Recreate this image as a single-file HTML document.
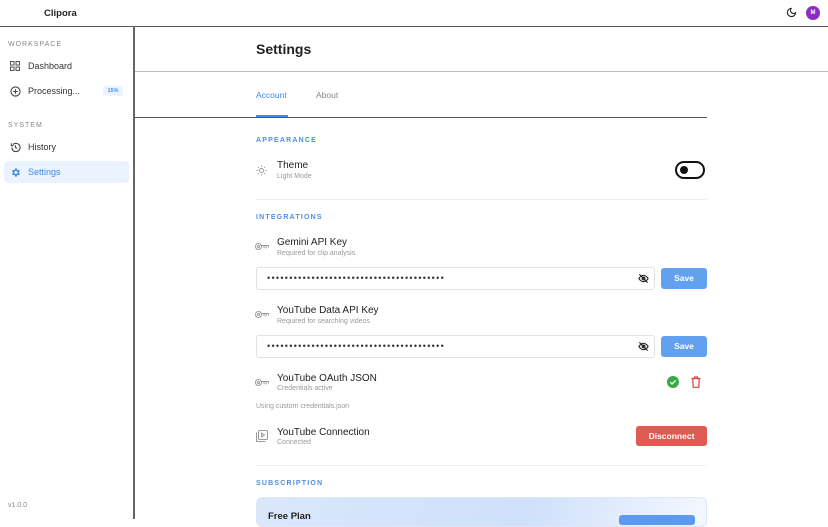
<!DOCTYPE html>
<html><head><meta charset="utf-8"><style>
*{box-sizing:border-box;margin:0;padding:0}
body{width:828px;height:519px;overflow:hidden;background:#fff;font-family:"Liberation Sans",sans-serif;color:#222;position:relative}
.a{position:absolute}
.lab{font-size:7px;font-weight:bold;letter-spacing:1.2px;color:#4a90e2}
.sl{font-size:7px;letter-spacing:1px;color:#888}
.ni{font-size:9px;color:#333}
.t{font-size:10px;color:#222;font-weight:500}
.s{font-size:7px;color:#999}
.inp{border:1px solid #e2e2e2;border-radius:3px;height:23px}
.dots{font-size:9px;letter-spacing:1.3px;color:#333;top:5px;left:10px}
.btn{background:#62a0f0;color:#fff;font-size:8.5px;font-weight:bold;border-radius:3px;text-align:center}
svg{position:absolute}
</style></head><body>
<div class="a" style="left:44px;top:8px;font-size:9.5px;font-weight:bold">Clipora</div>
<svg style="left:786px;top:7px" width="11" height="11" viewBox="0 0 24 24"><path d="M21 12.8A9 9 0 1 1 11.2 3a7 7 0 0 0 9.8 9.8z" fill="none" stroke="#222" stroke-width="2.4"/></svg>
<div class="a" style="left:806px;top:6px;width:14px;height:14px;border-radius:50%;background:#8e2bc4;color:#fff;font-size:6px;font-weight:bold;text-align:center;line-height:14px">M</div>
<div class="a" style="left:0;top:26px;width:828px;height:1px;background:#555"></div>
<div class="a" style="left:133px;top:26px;width:2px;height:493px;background:#666"></div>
<div class="a sl" style="left:8px;top:41px">WORKSPACE</div>
<svg style="left:10px;top:61px" width="10" height="10" viewBox="0 0 10 10" fill="none" stroke="#555" stroke-width="1"><rect x=".5" y=".5" width="3.5" height="3.5"/><rect x="6" y=".5" width="3.5" height="3.5"/><rect x=".5" y="6" width="3.5" height="3.5"/><rect x="6" y="6" width="3.5" height="3.5"/></svg>
<div class="a ni" style="left:28px;top:61px">Dashboard</div>
<svg style="left:10px;top:86px" width="11" height="11" viewBox="0 0 12 12" fill="none" stroke="#444" stroke-width="1.2"><circle cx="6" cy="6" r="5"/><path d="M6 3.5v5M3.5 6h5"/></svg>
<div class="a ni" style="left:28px;top:86px">Processing...</div>
<div class="a" style="left:103px;top:86px;width:20px;height:10px;background:#eaf3ff;color:#4a90e2;font-size:5.5px;font-weight:bold;text-align:center;line-height:10px;border-radius:2px">15%</div>
<div class="a sl" style="left:8px;top:122px">SYSTEM</div>
<svg style="left:10px;top:142px" width="11" height="11" viewBox="0 0 12 12" fill="none" stroke="#444" stroke-width="1.2"><path d="M2 6a4.5 4.5 0 1 0 1.3-3.2M1.5 1.5v2.5h2.5M6 3.5V6l1.8 1.2"/></svg>
<div class="a ni" style="left:28px;top:142px">History</div>
<div class="a" style="left:4px;top:161px;width:125px;height:22px;background:#eaf3ff;border-radius:4px"></div>
<svg style="left:10px;top:167px" width="11" height="11" viewBox="0 0 24 24"><path fill="#3d8ae8" d="M19.4 13a7.5 7.5 0 0 0 0-2l2.1-1.6-2-3.5-2.5 1a7.5 7.5 0 0 0-1.7-1L15 3h-4l-.4 2.9a7.5 7.5 0 0 0-1.7 1l-2.5-1-2 3.5L6.6 11a7.5 7.5 0 0 0 0 2l-2.1 1.6 2 3.5 2.5-1a7.5 7.5 0 0 0 1.7 1L11 21h4l.4-2.9a7.5 7.5 0 0 0 1.7-1l2.5 1 2-3.5zM13 15.5a3.5 3.5 0 1 1 0-7 3.5 3.5 0 0 1 0 7z"/></svg>
<div class="a ni" style="left:28px;top:167px;color:#3d8ae8">Settings</div>
<div class="a" style="left:8px;top:502px;font-size:7px;color:#888">v1.0.0</div>

<div class="a" style="left:256px;top:41px;font-size:14px;font-weight:bold">Settings</div>
<div class="a" style="left:135px;top:71px;width:693px;height:1px;background:#bbb"></div>
<div class="a" style="left:256px;top:90px;font-size:8.5px;color:#3d8ae8">Account</div>
<div class="a" style="left:316px;top:90px;font-size:8.5px;color:#888">About</div>
<div class="a" style="left:135px;top:117px;width:572px;height:1px;background:#555"></div>
<div class="a" style="left:256px;top:115px;width:32px;height:2px;background:#3d8ae8"></div>

<div class="a lab" style="left:256px;top:137px">APPEARANCE</div>
<svg style="left:256px;top:165px" width="11" height="11" viewBox="0 0 12 12" fill="none" stroke="#999" stroke-width="1"><circle cx="6" cy="6" r="2.2"/><path d="M6 .5v1.5M6 10v1.5M.5 6H2M10 6h1.5M2 2l1 1M9 9l1 1M2 10l1-1M9 3l1-1"/></svg>
<div class="a t" style="left:277px;top:160px">Theme</div>
<div class="a s" style="left:277px;top:173px">Light Mode</div>
<div class="a" style="left:675px;top:161px;width:30px;height:18px;border:2px solid #111;border-radius:9px"></div>
<div class="a" style="left:680px;top:166px;width:8px;height:8px;border-radius:50%;background:#111"></div>
<div class="a" style="left:256px;top:199px;width:451px;height:1px;background:#eee"></div>

<div class="a lab" style="left:256px;top:214px">INTEGRATIONS</div>
<svg style="left:255px;top:242px" width="14" height="9" viewBox="0 0 14 9" fill="none" stroke="#999" stroke-width="1"><circle cx="3.5" cy="4.5" r="3"/><circle cx="3.5" cy="4.5" r="1"/><path d="M6.5 3.5h7v2M11 3.5v3M9 3.5v2.5"/></svg>
<div class="a t" style="left:277px;top:237px">Gemini API Key</div>
<div class="a s" style="left:277px;top:250px">Required for clip analysis</div>
<div class="a inp" style="left:256px;top:267px;width:399px"><div class="a dots">••••••••••••••••••••••••••••••••••••••••</div></div>
<svg style="left:638px;top:273px" width="11" height="11" viewBox="0 0 24 24" fill="none" stroke="#222" stroke-width="2.6"><path d="M2 12s4-7 10-7 10 7 10 7-4 7-10 7S2 12 2 12z"/><circle cx="12" cy="12" r="3"/><path d="M3 3l18 18"/></svg>
<div class="a btn" style="left:661px;top:268px;width:46px;height:21px;line-height:21px">Save</div>

<svg style="left:255px;top:310px" width="14" height="9" viewBox="0 0 14 9" fill="none" stroke="#999" stroke-width="1"><circle cx="3.5" cy="4.5" r="3"/><circle cx="3.5" cy="4.5" r="1"/><path d="M6.5 3.5h7v2M11 3.5v3M9 3.5v2.5"/></svg>
<div class="a t" style="left:277px;top:305px">YouTube Data API Key</div>
<div class="a s" style="left:277px;top:318px">Required for searching videos</div>
<div class="a inp" style="left:256px;top:335px;width:399px"><div class="a dots">••••••••••••••••••••••••••••••••••••••••</div></div>
<svg style="left:638px;top:341px" width="11" height="11" viewBox="0 0 24 24" fill="none" stroke="#222" stroke-width="2.6"><path d="M2 12s4-7 10-7 10 7 10 7-4 7-10 7S2 12 2 12z"/><circle cx="12" cy="12" r="3"/><path d="M3 3l18 18"/></svg>
<div class="a btn" style="left:661px;top:336px;width:46px;height:21px;line-height:21px">Save</div>

<svg style="left:255px;top:378px" width="14" height="9" viewBox="0 0 14 9" fill="none" stroke="#999" stroke-width="1"><circle cx="3.5" cy="4.5" r="3"/><circle cx="3.5" cy="4.5" r="1"/><path d="M6.5 3.5h7v2M11 3.5v3M9 3.5v2.5"/></svg>
<div class="a t" style="left:277px;top:373px">YouTube OAuth JSON</div>
<div class="a s" style="left:277px;top:385px">Credentials active</div>
<svg style="left:667px;top:376px" width="12" height="12" viewBox="0 0 12 12"><circle cx="6" cy="6" r="6" fill="#3aa846"/><path d="M3.3 6.2l1.8 1.8 3.6-3.6" fill="none" stroke="#fff" stroke-width="1.3"/></svg>
<svg style="left:691px;top:376px" width="10" height="12" viewBox="0 0 10 12" fill="none" stroke="#e04a3f" stroke-width="1.3"><path d="M.5 2.5h9M3.5 2.5V1h3v1.5M1.8 2.5l.5 9h5.4l.5-9"/></svg>
<div class="a s" style="left:256px;top:403px">Using custom credentials.json</div>
<svg style="left:256px;top:430px" width="12" height="12" viewBox="0 0 12 12" fill="none" stroke="#999" stroke-width="1"><rect x="2.5" y=".5" width="9" height="9" rx="1"/><path d="M.5 2.5v9h9"/><path d="M5.5 3v4l3-2z"/></svg>
<div class="a t" style="left:277px;top:427px">YouTube Connection</div>
<div class="a s" style="left:277px;top:439px">Connected</div>
<div class="a btn" style="left:636px;top:426px;width:71px;height:20px;line-height:20px;background:#df5a52">Disconnect</div>
<div class="a" style="left:256px;top:465px;width:451px;height:1px;background:#eee"></div>
<div class="a lab" style="left:256px;top:480px">SUBSCRIPTION</div>
<div class="a" style="left:256px;top:497px;width:451px;height:30px;border:1px solid #dde8f8;border-radius:6px;background:linear-gradient(100deg,#dae7fb,#cfe0fa 60%,#f3f8ff)"></div>
<div class="a" style="left:268px;top:511px;font-size:9.5px;font-weight:bold">Free Plan</div>
<div class="a" style="left:619px;top:515px;width:76px;height:10px;background:#5c9af0;border-radius:3px"></div>
</body></html>
